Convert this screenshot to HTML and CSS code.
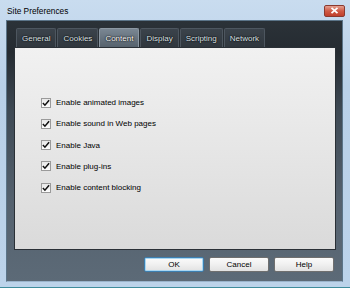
FILE: index.html
```html
<!DOCTYPE html>
<html lang="en">
<head>
    <meta charset="UTF-8">
    <title>Site Preferences</title>
    <link rel="stylesheet" href="styles.css">
</head>
<body>
    <div class="window">
        <div class="titlebar">
            <span class="title">Site Preferences</span>
            <span class="close">
                <svg width="9" height="7" viewBox="0 0 9 7"><path d="M1.5 0.8 L7.5 6.2 M7.5 0.8 L1.5 6.2" stroke="#fff" stroke-width="1.8"/></svg>
            </span>
        </div>
        <div class="client">
            <div class="tabs">
                <div class="tab">General</div>
                <div class="tab">Cookies</div>
                <div class="tab active">Content</div>
                <div class="tab">Display</div>
                <div class="tab">Scripting</div>
                <div class="tab">Network</div>
            </div>
            <div class="panel">
                <label class="option"><span class="box"><svg width="9" height="8" viewBox="0 0 9 8"><path d="M1 4 L3.3 6.5 L8 1" fill="none" stroke="#111" stroke-width="1.7"/></svg></span>Enable animated images</label>
                <label class="option"><span class="box"><svg width="9" height="8" viewBox="0 0 9 8"><path d="M1 4 L3.3 6.5 L8 1" fill="none" stroke="#111" stroke-width="1.7"/></svg></span>Enable sound in Web pages</label>
                <label class="option"><span class="box"><svg width="9" height="8" viewBox="0 0 9 8"><path d="M1 4 L3.3 6.5 L8 1" fill="none" stroke="#111" stroke-width="1.7"/></svg></span>Enable Java</label>
                <label class="option"><span class="box"><svg width="9" height="8" viewBox="0 0 9 8"><path d="M1 4 L3.3 6.5 L8 1" fill="none" stroke="#111" stroke-width="1.7"/></svg></span>Enable plug-ins</label>
                <label class="option"><span class="box"><svg width="9" height="8" viewBox="0 0 9 8"><path d="M1 4 L3.3 6.5 L8 1" fill="none" stroke="#111" stroke-width="1.7"/></svg></span>Enable content blocking</label>
            </div>
            <div class="buttons">
                <button class="btn default">OK</button>
                <button class="btn">Cancel</button>
                <button class="btn">Help</button>
            </div>
        </div>
    </div>
</body>
</html>
```

FILE: styles.css
```css
body {
    margin: 0;
    font-family: "Liberation Sans", Arial, sans-serif;
    font-size: 8px;
    background: #bcd3ea;
}
.window {
    width: 350px;
    height: 288px;
    box-sizing: border-box;
    background: linear-gradient(#c9dcef, #b9d0e8 30%, #bcd3ea);
    border-bottom: 1px solid #3f8c9c;
    padding: 0 7px 5px 6px;
    display: flex;
    flex-direction: column;
}
.titlebar {
    height: 20px;
    display: flex;
    align-items: center;
    justify-content: space-between;
    flex-shrink: 0;
}
.title {
    color: #000;
    font-size: 8.3px;
    padding-left: 1px;
    padding-top: 2px;
}
.close {
    width: 19px;
    height: 10px;
    margin-top: 1px;
    margin-right: -2px;
    border: 1px solid #8a3a30;
    border-radius: 2px;
    background: linear-gradient(#e4a091, #cf5a45 50%, #c0402c);
    display: flex;
    align-items: center;
    justify-content: center;
}
.client {
    flex: 1;
    background: linear-gradient(#2b3238, #252b31 12%, #3f4a55 35%, #55626f 70%, #5c6a77);
    border: 1px solid #5b7488;
    border-bottom-color: #9ab4cc;
    display: flex;
    flex-direction: column;
}
.tabs {
    display: flex;
    gap: 1px;
    margin: 7px 0 0 9px;
    height: 19px;
}
.tab {
    padding: 0 5px;
    line-height: 19px;
    color: #dfe5ea;
    text-shadow: 0 0 2px #000, 0 0 1px #000;
    background: linear-gradient(#3b434b, #30373e);
    border: 1px solid #4d565f;
    border-bottom: none;
    border-radius: 2px 2px 0 0;
}
.tab.active {
    background: linear-gradient(#7a8793, #56626d);
    border-color: #8c98a3;
    color: #fff;
}
.panel {
    height: 203px;
    margin: 0 6px 0 7px;
    box-sizing: border-box;
    background: linear-gradient(#f1f1f1, #e6e6e6 50%, #dadada);
    border: 1px solid #2a3036;
    padding: 49px 0 0 26px;
    display: flex;
    flex-direction: column;
    gap: 10.3px;
}
.option {
    display: flex;
    align-items: center;
    gap: 5px;
    height: 11px;
    color: #000;
}
.box {
    width: 8px;
    height: 8px;
    border: 1px solid #9a9a9a;
    background: linear-gradient(#e8e8e8, #fdfdfd);
    display: flex;
    align-items: center;
    justify-content: center;
}
.buttons {
    display: flex;
    justify-content: flex-end;
    gap: 5px;
    padding: 7px 8px 0 0;
}
.btn {
    width: 60px;
    height: 15px;
    padding: 0;
    font-family: "Liberation Sans", Arial, sans-serif;
    font-size: 8px;
    color: #000;
    background: linear-gradient(#fbfbfb, #f0f0f0 50%, #e2e2e2);
    border: 1px solid #6f6f6f;
    border-radius: 2px;
}
.btn.default {
    border-color: #3c7fb1;
    box-shadow: inset 0 0 0 1px #a9d7f2;
}
```
